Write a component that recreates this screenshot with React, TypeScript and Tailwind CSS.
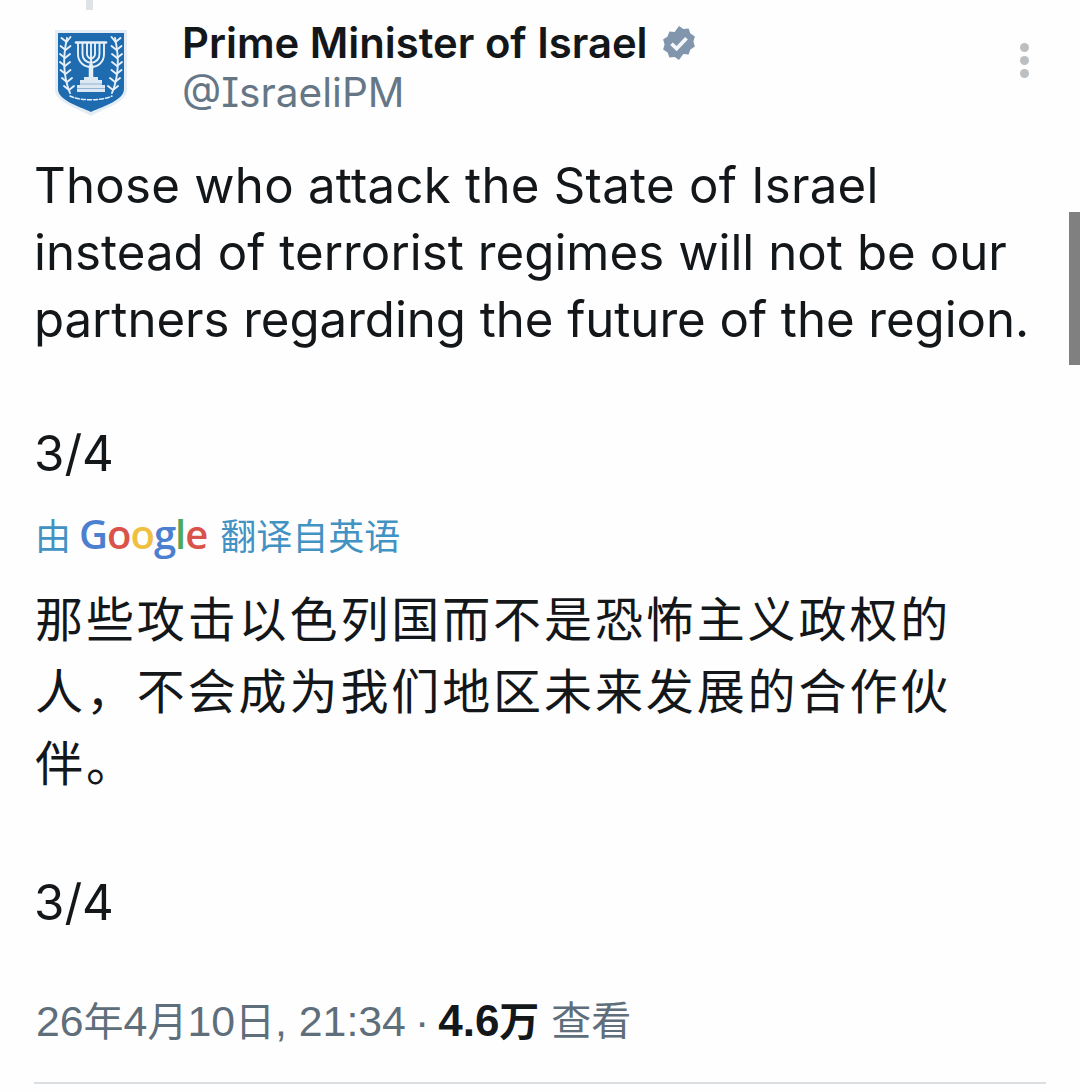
import React from "react";

function Crest() {
  return (
    <svg width="72" height="86" viewBox="0 0 72 86" className="shrink-0">
      <path d="M0 0H72V60C72 72 50 78 36 86C22 78 0 72 0 60Z" fill="#e4edf5" />
      <path d="M3 3H69V59C69 70 49 76 36 82C23 76 3 70 3 59Z" fill="#1e6bb0" />
      <g stroke="#e8f0f7" fill="none" strokeWidth="1.9" strokeLinecap="round">
        <path d="M36 36V50" strokeWidth="4.5" />
        <path d="M36 13V36" />
        <path d="M32 13V24C32 27 34 28 36 29C38 28 40 27 40 24V13" />
        <path d="M27.500 13V24C27.500 29 31 32 36 33C41 32 44.500 29 44.500 24V13" />
        <path d="M23 13V24C23 32 29 37 36 37C43 37 49 32 49 24V13" />
        <path d="M21 12.500H51" strokeWidth="2.600" />
        <path d="M12 8C8 26 8 46 15 63" />
        <path d="M60 8C64 26 64 46 57 63" />
        <path d="M11.500 12l-5 -4M11.500 12l4 -5M10.500 20l-5 -4M10.500 20l5 -4M10 28l-5 -4M10 28l5 -4M10 36l-5 -4M10 36l5 -4M10.500 44l-5 -4M10.500 44l5 -4M12 52l-5 -4M12 52l5 -4M14 60l-5 -4M14 60l5 -4" />
        <path d="M60.500 12l5 -4M60.500 12l-4 -5M61.500 20l5 -4M61.500 20l-5 -4M62 28l5 -4M62 28l-5 -4M62 36l5 -4M62 36l-5 -4M61.500 44l5 -4M61.500 44l-5 -4M60 52l5 -4M60 52l-5 -4M58 60l5 -4M58 60l-5 -4" />
        <path d="M15 66C24 71 48 71 57 66" strokeWidth="1.500" strokeDasharray="4 2" />
      </g>
      <path d="M29 47H43V50H47V55H50V62H22V55H25V50H29Z" fill="#dde8f3" />
      <path d="M22 58.500H50M25 54H47" stroke="#8fb4d6" strokeWidth="1" />
    </svg>
  );
}

function Verified() {
  return (
    <svg width="36" height="36" viewBox="0 0 24 24" className="shrink-0">
      <path
        d="M12 0.600l2.900 2.100 3.500-.3 1.200 3.300 3 1.900-1 3.400 1 3.400-3 1.900-1.200 3.300-3.500-.3L12 23.400l-2.900-2.100-3.500.3-1.200-3.300-3-1.900 1-3.400-1-3.400 3-1.900 1.200-3.300 3.500.3z"
        fill="#8195ad"
      />
      <path d="M7 12.500l3.400 3.300L17 8.800" fill="none" stroke="#f5f8fa" strokeWidth="2.500" />
    </svg>
  );
}

export default function App() {
  const body = "text-[#14171a] text-[49.2px] leading-[67px] ml-[-2px] font-['Inter','Noto_Sans_CJK_SC',sans-serif]";
  const cjk = "text-[#14171a] text-[48px] leading-[72px] tracking-[2.9px] ml-[-1px] font-['Noto_Sans_CJK_SC',sans-serif]";
  const small = "text-[40px]";
  return (
    <div className="relative w-[1080px] h-[1092px] bg-[#fefefe] overflow-hidden">
      <div className="absolute left-[86px] top-0 w-[7px] h-[10px] bg-[#dfe3e6]" />
      <div className="absolute right-0 top-[212px] w-[11px] h-[153px] bg-[#808080]" />

      <div className="pl-[36px] pr-[36px] pt-[21px]">
        <div className="flex items-start">
          <div className="pl-[19px] pt-[9px] w-[146px]">
            <Crest />
          </div>
          <div className="flex-1 min-w-0">
            <div className="flex items-center gap-[13px] h-[44px]">
              <span className="text-[#14171a] text-[41.8px] font-semibold font-['Inter',sans-serif] whitespace-nowrap">
                Prime Minister of Israel
              </span>
              <Verified />
            </div>
            <div className="text-[#657786] text-[40.6px] leading-[56px] font-['Inter',sans-serif] [font-feature-settings:'cv08']">
              @IsraeliPM
            </div>
          </div>
          <div className="flex flex-col gap-[4px] pt-[22px] mr-[15px]">
            <span className="w-[9px] h-[9px] rounded-full bg-[#bcbfc2]" />
            <span className="w-[9px] h-[9px] rounded-full bg-[#bcbfc2]" />
            <span className="w-[9px] h-[9px] rounded-full bg-[#bcbfc2]" />
          </div>
        </div>

        <div className={`${body} mt-[31px]`}>
          <div className="whitespace-nowrap tracking-[0.25px]">Those who attack the State of Israel</div>
          <div className="whitespace-nowrap tracking-[0.05px]">instead of terrorist regimes will not be our</div>
          <div className="whitespace-nowrap tracking-[-0.05px]">partners regarding the future of the region.</div>
          <div className="mt-[67px]">3/4</div>
        </div>

        <div className="flex items-center h-[50px] mt-[22px] mb-[1px] ml-[-1px] text-[#4392c4] text-[36px] font-['Noto_Sans_CJK_SC',sans-serif]">
          <span>由</span>
          <span className="ml-[8px] mr-[13px] text-[40px] tracking-[-1px] font-semibold font-['Open_Sans',sans-serif]">
            <span className="text-[#4d7fd0]">G</span>
            <span className="text-[#d9534a]">o</span>
            <span className="text-[#efc040]">o</span>
            <span className="text-[#4d7fd0]">g</span>
            <span className="text-[#4fa85f]">l</span>
            <span className="text-[#d9534a]">e</span>
          </span>
          <span>翻译自英语</span>
        </div>

        <div className={`${cjk} mt-[21px]`}>
          <div className="whitespace-nowrap">那些攻击以色列国而不是恐怖主义政权的</div>
          <div className="whitespace-nowrap">人，不会成为我们地区未来发展的合作伙</div>
          <div className="whitespace-nowrap">伴。</div>
        </div>
        <div className={`${body} mt-[73px]`}>3/4</div>

        <div className="flex items-center h-[50px] mt-[60px] text-[#5f6e7b] text-[42.8px] font-['Liberation_Sans','Noto_Sans_CJK_SC',sans-serif] whitespace-nowrap">
          <span>
            26<span className={small}>年</span>4<span className={small}>月</span>10<span className={small}>日</span>, 21:34
          </span>
          <span className="mx-[9px]">·</span>
          <span className="text-[#14171a] font-bold text-[44px]">
            4.6<span className={small}>万</span>
          </span>
          <span className={`${small} ml-[12px]`}>查看</span>
        </div>
      </div>
      <div className="mx-[34px] mt-[36px] h-[2px] bg-[#dcdfe2]" />
    </div>
  );
}
